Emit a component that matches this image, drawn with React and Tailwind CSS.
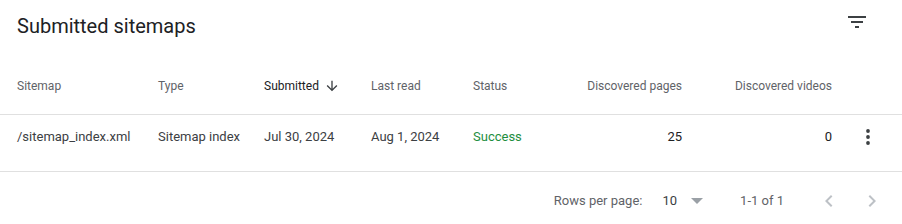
import React from "react";

const columns = [
    { key: "path", label: "Sitemap", width: "w-[141px]" },
    { key: "type", label: "Type", width: "w-[106px]" },
    { key: "submitted", label: "Submitted", width: "w-[107px]", sorted: true },
    { key: "lastRead", label: "Last read", width: "w-[102px]" },
    { key: "status", label: "Status", width: "w-[110px]" },
    { key: "pages", label: "Discovered pages", width: "w-[99px]", right: true },
    { key: "videos", label: "Discovered videos", width: "w-[150px]", right: true },
];

const rows = [
    {
        path: "/sitemap_index.xml",
        type: "Sitemap index",
        submitted: "Jul 30, 2024",
        lastRead: "Aug 1, 2024",
        status: "Success",
        pages: 25,
        videos: 0,
    },
];

function FilterIcon() {
    return (
        <svg width="24" height="24" viewBox="0 0 24 24" className="fill-[#3c4043]">
            <path d="M10 18h4v-2h-4v2zM3 6v2h18V6H3zm3 7h12v-2H6v2z" />
        </svg>
    );
}

function MoreIcon() {
    return (
        <svg width="24" height="24" viewBox="0 0 24 24" className="fill-[#3c4043]">
            <circle cx="12" cy="6" r="1.9" />
            <circle cx="12" cy="12" r="1.9" />
            <circle cx="12" cy="18" r="1.9" />
        </svg>
    );
}

export default function App() {
    return (
        <div className="w-[902px] h-[224px] bg-white overflow-hidden font-['Roboto',_'Liberation_Sans',_sans-serif]">
            {/* 标题 */}
            <div className="flex items-start justify-between h-[56px] pl-[17px] pr-[33px]">
                <h2 className="pt-[12px] text-[20px] leading-[28px] text-[#202124] font-normal">
                    Submitted sitemaps
                </h2>
                <button className="mt-[10px] w-6 h-6">
                    <FilterIcon />
                </button>
            </div>

            {/* 表头 */}
            <div className="flex items-center h-[58px] pt-[2px] pl-[17px] text-[12px] leading-4 text-[#5f6368]">
                {columns.map((c) => (
                    <div key={c.key} className={`${c.width} ${c.right ? "text-right" : ""}`}>
                        {c.sorted ? (
                            <span className="inline-flex items-center text-[#202124]">
                                {c.label}
                                <svg width="16" height="16" viewBox="0 0 24 24" className="ml-[5px] fill-[#3c4043]">
                                    <path d="M20 12l-1.41-1.41L13 16.17V4h-2v12.17l-5.58-5.59L4 12l8 8 8-8z" />
                                </svg>
                            </span>
                        ) : (
                            c.label
                        )}
                    </div>
                ))}
            </div>

            {/* 数据行 */}
            {rows.map((r) => (
                <div
                    key={r.path}
                    className="flex items-center h-[58px] pb-[12px] pl-[17px] border-y border-[#e0e0e0] text-[13px] leading-5 text-[#3c4043]"
                >
                    <div className="w-[141px]">{r.path}</div>
                    <div className="w-[106px]">{r.type}</div>
                    <div className="w-[107px]">{r.submitted}</div>
                    <div className="w-[102px]">{r.lastRead}</div>
                    <div className="w-[110px] text-[#1e8e3e]">{r.status}</div>
                    <div className="w-[99px] text-right text-[#202124]">{r.pages}</div>
                    <div className="w-[150px] text-right text-[#202124]">{r.videos}</div>
                    <button className="ml-[24px] w-6 h-6">
                        <MoreIcon />
                    </button>
                </div>
            ))}

            {/* 分页 */}
            <div className="flex items-center justify-end h-[56px] pt-[2px] pr-[18px] text-[13px] leading-4 text-[#5f6368]">
                <span>Rows per page:</span>
                <span className="ml-[20px] text-[#3c4043]">10</span>
                <svg width="12" height="6" viewBox="0 0 12 6" className="ml-[14px] fill-[#9aa0a6]">
                    <path d="M0 0l6 6 6-6z" />
                </svg>
                <span className="ml-[37px]">1-1 of 1</span>
                <button className="ml-[33px] w-6 h-6" disabled>
                    <svg width="24" height="24" viewBox="0 0 24 24" className="fill-[#bdc1c6]">
                        <path d="M15.41 7.41L14 6l-6 6 6 6 1.41-1.41L10.83 12z" />
                    </svg>
                </button>
                <button className="ml-[19px] w-6 h-6" disabled>
                    <svg width="24" height="24" viewBox="0 0 24 24" className="fill-[#bdc1c6]">
                        <path d="M10 6L8.59 7.41 13.17 12l-4.58 4.59L10 18l6-6z" />
                    </svg>
                </button>
            </div>
        </div>
    );
}
